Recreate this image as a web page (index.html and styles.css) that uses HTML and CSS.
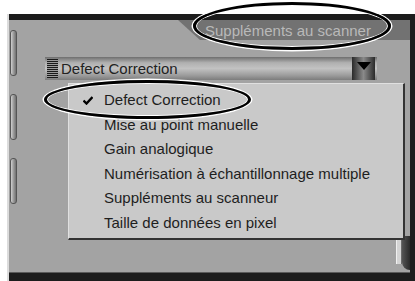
FILE: index.html
```html
<!DOCTYPE html>
<html lang="fr">
<head>
<meta charset="utf-8">
<link rel="stylesheet" href="styles.css">
</head>
<body>
<div class="panel">
  <div class="topbar"></div>
  <div class="body">
    <div class="grips">
      <div class="grip"></div>
      <div class="grip"></div>
      <div class="grip"></div>
    </div>
    <div class="main">
      <div class="header">
        <div class="tab"><span>Suppléments au scanner</span></div>
      </div>
      <div class="combo">
        <div class="stripes"></div>
        <span class="combo-text">Defect Correction</span>
        <div class="arrow"><svg width="14" height="8" viewBox="0 0 14 8"><polygon points="0,0 14,0 7,8" fill="#000"/></svg></div>
      </div>
      <div class="scrollbit"><div class="knob"></div><div class="hook"></div></div>
    </div>
  </div>
  <div class="bottombar"></div>
</div>

<ul class="menu">
  <li class="checked"><svg class="check" width="10" height="9" viewBox="0 0 10 9"><path d="M0.5 4.5 L3.5 7.5 L9.5 1" fill="none" stroke="#000" stroke-width="2.4"/></svg>Defect Correction</li>
  <li>Mise au point manuelle</li>
  <li>Gain analogique</li>
  <li>Numérisation à échantillonnage multiple</li>
  <li>Suppléments au scanneur</li>
  <li>Taille de données en pixel</li>
</ul>

<div class="ring ring-tab"></div>
<div class="ring ring-item"></div>
</body>
</html>
```

FILE: styles.css
```css
html, body {
  margin: 0;
  padding: 0;
  background: #ffffff;
  font-family: "Liberation Sans", Arial, sans-serif;
  width: 415px;
  height: 281px;
  overflow: hidden;
}

.panel {
  margin: 14px 0 0 7px;
  width: 401px;
  height: 267px;
  background: #a3a3a3;
  border-left: 2px solid #dcdcdc;
  border-right: 5px solid #1e1e1e;
  display: flex;
  flex-direction: column;
}

.topbar {
  height: 6px;
  background: #1c1c1c;
  flex: none;
}

.body {
  flex: 1;
  display: flex;
  min-height: 0;
}

.grips {
  width: 20px;
  flex: none;
  display: flex;
  flex-direction: column;
  gap: 18px;
  padding-top: 10px;
  box-sizing: border-box;
  padding-left: 1px;
}

.grip {
  width: 5px;
  height: 44px;
  border: 1px solid #555;
  border-radius: 3px;
  background: linear-gradient(to right, #d0d0d0 0, #a0a0a0 45%, #707070 100%);
}

.main {
  flex: 1;
  display: flex;
  flex-direction: column;
}

.header {
  display: flex;
  justify-content: flex-end;
  height: 20px;
}

.tab {
  width: 232px;
  height: 20px;
  background: #727272;
  clip-path: polygon(0 0, 100% 0, 100% 100%, 22px 100%);
  display: flex;
  align-items: center;
  padding-left: 27px;
  box-sizing: border-box;
}

.tab span {
  color: #b9b9b9;
  font-size: 15px;
}

.combo {
  margin: 17px 0 0 16px;
  width: 332px;
  height: 23px;
  display: flex;
  align-items: center;
  background: linear-gradient(to bottom, #6e6e6e 0, #b0b0b0 25%, #c2c2c2 50%, #9c9c9c 80%, #7c7c7c 100%);
}

.stripes {
  width: 11px;
  height: 19px;
  margin-left: 2px;
  background: repeating-linear-gradient(to bottom, #1a1a1a 0, #1a1a1a 1px, #9a9a9a 1px, #9a9a9a 2px);
  flex: none;
}

.combo-text {
  margin-left: 3px;
  font-size: 15px;
  color: #222;
  flex: 1;
  line-height: 23px;
}

.arrow {
  width: 23px;
  height: 23px;
  margin-right: 2px;
  background: linear-gradient(to right, #2a2a2a 0, #5a5a5a 25%, #8a8a8a 50%, #5a5a5a 75%, #2a2a2a 100%);
  display: flex;
  align-items: flex-start;
  justify-content: center;
  padding-top: 5px;
  box-sizing: border-box;
  flex: none;
}

.scrollbit {
  margin-top: auto;
  margin-bottom: 2px;
  align-self: flex-end;
  display: flex;
  align-items: flex-end;
  height: 34px;
}

.knob {
  width: 4px;
  height: 26px;
  background: #d4d4d4;
  border-left: 1px solid #f0f0f0;
  border-right: 1px solid #6a6a6a;
  margin-bottom: 6px;
}

.hook {
  width: 8px;
  height: 34px;
  background: linear-gradient(to right, #555, #2a2a2a);
  border-radius: 0 0 0 8px;
}

.bottombar {
  height: 8px;
  flex: none;
  background: #1c1c1c;
  border-top: 1px solid #5a5a5a;
}

.menu {
  position: absolute;
  left: 68px;
  top: 83px;
  width: 337px;
  height: 157px;
  margin: 0;
  padding: 4px 0 0 0;
  box-sizing: border-box;
  list-style: none;
  background: #c9c9c9;
  border-top: 1px solid #e0e0e0;
  border-left: 1px solid #e0e0e0;
  border-right: 2px solid #333;
  border-bottom: 2px solid #333;
}

.menu li {
  height: 24.6px;
  line-height: 24.6px;
  padding-left: 35px;
  font-size: 15px;
  color: #1e1e1e;
  position: relative;
  white-space: nowrap;
}

.check {
  position: absolute;
  left: 14px;
  top: 8px;
}

.ring {
  position: absolute;
  border: 3px solid #000;
  border-radius: 50%;
  box-shadow: 0 0 0 1.5px #fff, inset 0 0 0 1px #fff;
  box-sizing: border-box;
}

.ring-tab {
  left: 193px;
  top: 2px;
  width: 198px;
  height: 48px;
}

.ring-item {
  left: 44px;
  top: 80px;
  width: 207px;
  height: 39px;
}
```
